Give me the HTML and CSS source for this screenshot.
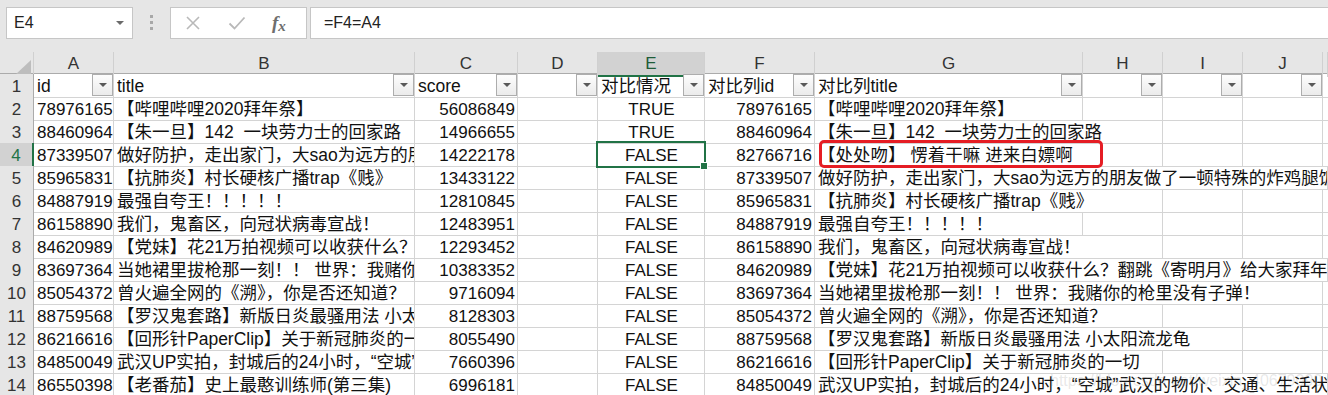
FILE: index.html
```html
<!DOCTYPE html>
<html lang="zh-CN">
<head>
  <meta charset="UTF-8">
  <title>对比列title</title>
  <link rel="stylesheet" href="styles.css">
</head>
<body>
<div class="formula-bar">
  <div class="name-box"><span class="ref">E4</span><i class="caret"></i></div>
  <div class="grip"><i></i><i></i><i></i></div>
  <div class="func-box">
    <svg class="ico" width="16" height="16" viewBox="0 0 16 16"><path d="M2 2 L14 14 M14 2 L2 14" stroke="#b9b9b9" stroke-width="1.6" fill="none"/></svg>
    <svg class="ico" width="18" height="16" viewBox="0 0 18 16"><path d="M1.5 8.5 L6.5 13.5 L16.5 2.5" stroke="#b9b9b9" stroke-width="1.8" fill="none"/></svg>
    <span class="fx">f<span>x</span></span>
  </div>
  <div class="formula">=F4=A4</div>
</div>

<div class="sheet">
  <!-- 列标 -->
  <div class="row col-head">
    <div class="corner"><i></i></div>
    <div class="ch">A</div><div class="ch">B</div><div class="ch">C</div><div class="ch">D</div>
    <div class="ch on">E</div><div class="ch">F</div><div class="ch">G</div><div class="ch">H</div>
    <div class="ch">I</div><div class="ch">J</div><div class="ch"></div>
  </div>

  <!-- 表头 + 筛选按钮 -->
  <div class="row">
    <div class="rh">1</div>
    <div class="c hd"><span>id</span><b class="flt"></b></div>
    <div class="c hd"><span>title</span><b class="flt"></b></div>
    <div class="c hd"><span>score</span><b class="flt"></b></div>
    <div class="c hd"><span></span><b class="flt"></b></div>
    <div class="c hd"><span>对比情况</span><b class="flt"></b></div>
    <div class="c hd"><span>对比列id</span><b class="flt"></b></div>
    <div class="c hd"><span>对比列title</span><b class="flt"></b></div>
    <div class="c hd"><span></span><b class="flt"></b></div>
    <div class="c hd"><span></span><b class="flt"></b></div>
    <div class="c hd"><span></span><b class="flt"></b></div>
    <div class="c"></div>
  </div>

  <div class="row">
    <div class="rh">2</div>
    <div class="c num">78976165</div><div class="c">【哔哩哔哩2020拜年祭】</div><div class="c num">56086849</div><div class="c"></div>
    <div class="c mid">TRUE</div><div class="c num">78976165</div><div class="c">【哔哩哔哩2020拜年祭】</div>
    <div class="c"></div><div class="c"></div><div class="c"></div><div class="c"></div>
  </div>
  <div class="row">
    <div class="rh">3</div>
    <div class="c num">88460964</div><div class="c">【朱一旦】142  一块劳力士的回家路</div><div class="c num">14966655</div><div class="c"></div>
    <div class="c mid">TRUE</div><div class="c num">88460964</div><div class="c g2">【朱一旦】142  一块劳力士的回家路</div>
    <div class="c"></div><div class="c"></div><div class="c"></div>
  </div>
  <div class="row">
    <div class="rh on">4</div>
    <div class="c num">87339507</div><div class="c">做好防护，走出家门，大sao为远方的朋友做了一顿特殊的炸鸡腿饭</div><div class="c num">14222178</div><div class="c"></div>
    <div class="c mid sel">FALSE</div><div class="c num">82766716</div><div class="c g2">【处处吻】 愣着干嘛 进来白嫖啊</div>
    <div class="c"></div><div class="c"></div><div class="c"></div>
  </div>
  <div class="row">
    <div class="rh">5</div>
    <div class="c num">85965831</div><div class="c">【抗肺炎】村长硬核广播trap《贱》</div><div class="c num">13433122</div><div class="c"></div>
    <div class="c mid">FALSE</div><div class="c num">87339507</div><div class="c g5">做好防护，走出家门，大sao为远方的朋友做了一顿特殊的炸鸡腿饭</div>
  </div>
  <div class="row">
    <div class="rh">6</div>
    <div class="c num">84887919</div><div class="c">最强自夸王！！！！！</div><div class="c num">12810845</div><div class="c"></div>
    <div class="c mid">FALSE</div><div class="c num">85965831</div><div class="c g2">【抗肺炎】村长硬核广播trap《贱》</div>
    <div class="c"></div><div class="c"></div><div class="c"></div>
  </div>
  <div class="row">
    <div class="rh">7</div>
    <div class="c num">86158890</div><div class="c">我们，鬼畜区，向冠状病毒宣战！</div><div class="c num">12483951</div><div class="c"></div>
    <div class="c mid">FALSE</div><div class="c num">84887919</div><div class="c">最强自夸王！！！！！</div>
    <div class="c"></div><div class="c"></div><div class="c"></div><div class="c"></div>
  </div>
  <div class="row">
    <div class="rh">8</div>
    <div class="c num">84620989</div><div class="c">【党妹】花21万拍视频可以收获什么？翻跳《寄明月》给大家拜年</div><div class="c num">12293452</div><div class="c"></div>
    <div class="c mid">FALSE</div><div class="c num">86158890</div><div class="c g2">我们，鬼畜区，向冠状病毒宣战！</div>
    <div class="c"></div><div class="c"></div><div class="c"></div>
  </div>
  <div class="row">
    <div class="rh">9</div>
    <div class="c num">83697364</div><div class="c">当她裙里拔枪那一刻！！ 世界：我赌你的枪里没有子弹！</div><div class="c num">10383352</div><div class="c"></div>
    <div class="c mid">FALSE</div><div class="c num">84620989</div><div class="c g5">【党妹】花21万拍视频可以收获什么？翻跳《寄明月》给大家拜年</div>
  </div>
  <div class="row">
    <div class="rh">10</div>
    <div class="c num">85054372</div><div class="c">曾火遍全网的《溯》，你是否还知道？</div><div class="c num">9716094</div><div class="c"></div>
    <div class="c mid">FALSE</div><div class="c num">83697364</div><div class="c g4">当她裙里拔枪那一刻！！ 世界：我赌你的枪里没有子弹！</div>
    <div class="c"></div>
  </div>
  <div class="row">
    <div class="rh">11</div>
    <div class="c num">88759568</div><div class="c">【罗汉鬼套路】新版日炎最骚用法 小太阳流龙龟</div><div class="c num">8128303</div><div class="c"></div>
    <div class="c mid">FALSE</div><div class="c num">85054372</div><div class="c g2">曾火遍全网的《溯》，你是否还知道？</div>
    <div class="c"></div><div class="c"></div><div class="c"></div>
  </div>
  <div class="row">
    <div class="rh">12</div>
    <div class="c num">86216616</div><div class="c">【回形针PaperClip】关于新冠肺炎的一切</div><div class="c num">8055490</div><div class="c"></div>
    <div class="c mid">FALSE</div><div class="c num">88759568</div><div class="c g3">【罗汉鬼套路】新版日炎最骚用法 小太阳流龙龟</div>
    <div class="c"></div><div class="c"></div>
  </div>
  <div class="row">
    <div class="rh">13</div>
    <div class="c num">84850049</div><div class="c">武汉UP实拍，封城后的24小时，“空城”武汉的物价、交通、生活</div><div class="c num">7660396</div><div class="c"></div>
    <div class="c mid">FALSE</div><div class="c num">86216616</div><div class="c g2">【回形针PaperClip】关于新冠肺炎的一切</div>
    <div class="c"></div><div class="c"></div><div class="c"></div>
  </div>
  <div class="row">
    <div class="rh">14</div>
    <div class="c num">86550398</div><div class="c">【老番茄】史上最憨训练师(第三集)</div><div class="c num">6996181</div><div class="c"></div>
    <div class="c mid">FALSE</div><div class="c num">84850049</div><div class="c g5">武汉UP实拍，封城后的24小时，“空城”武汉的物价、交通、生活状况</div>
  </div>

  <!-- 截图上的红框标注和水印 -->
  <div class="mark"></div>
  <div class="watermark">https://blog.csdn.net/weixin_40679090</div>
</div>
</body>
</html>
```

FILE: styles.css
```css
* {
  margin: 0;
  padding: 0;
  box-sizing: border-box;
}
html, body {
  width: 100%;
  height: 100%;
  overflow: hidden;
  background: #fff;
}
body {
  font-family: "Liberation Sans", "Noto Sans CJK SC", sans-serif;
  font-size: 17px;
  color: #111;
}

/* ---------- 编辑栏 ---------- */
.formula-bar {
  display: flex;
  align-items: flex-start;
  height: 52px;
  padding: 7px 0 0 6px;
  background: #e6e6e6;
}
.name-box {
  display: flex;
  align-items: center;
  width: 127px;
  height: 32px;
  padding: 0 8px 0 7px;
  background: #fff;
  border: 1px solid #c6c6c6;
  font-size: 16px;
  color: #222;
}
.name-box .ref {
  flex: 1;
}
.caret {
  width: 0;
  height: 0;
  border-left: 4px solid transparent;
  border-right: 4px solid transparent;
  border-top: 4px solid #6a6a6a;
}
.grip {
  width: 37px;
  display: flex;
  flex-direction: column;
  align-items: center;
  gap: 3px;
  padding-top: 8px;
}
.grip i {
  width: 3px;
  height: 3px;
  background: #a8a8a8;
}
.func-box {
  display: flex;
  align-items: center;
  width: 137px;
  height: 32px;
  padding-left: 14px;
  gap: 28px;
  background: #fff;
  border: 1px solid #c6c6c6;
}
.func-box .ico:nth-child(2) {
  margin-left: -1px;
}
.fx {
  font-family: "Liberation Serif", serif;
  font-style: italic;
  font-weight: bold;
  font-size: 19px;
  color: #6e6e6e;
  margin-left: -2px;
}
.fx span {
  font-size: 15px;
  position: relative;
  top: 2px;
}
.formula {
  flex: 1;
  height: 32px;
  margin-left: 3px;
  margin-right: -2px;
  padding-left: 13px;
  line-height: 30px;
  font-size: 16px;
  color: #222;
  background: #fff;
  border: 1px solid #c6c6c6;
}

/* ---------- 表格 ---------- */
.sheet {
  position: relative;
}
.row {
  display: grid;
  grid-template-columns: 34px 80px 301px 103px 80px 107px 110px 268px 80px 80px 80px 1fr;
  height: 23px;
}
.col-head {
  height: 22px;
  background: #e6e6e6;
  border-bottom: 1px solid #ababab;
}
.corner {
  display: flex;
  align-items: flex-end;
  justify-content: flex-end;
  padding: 0 2px 2px 0;
  border-right: 1px solid #d0d0d0;
}
.corner i {
  width: 0;
  height: 0;
  border-left: 16px solid transparent;
  border-bottom: 15px solid #bdbdbd;
}
.ch {
  border-right: 1px solid #d0d0d0;
  text-align: center;
  line-height: 22px;
  padding-top: 1px;
  font-size: 17px;
  color: #333;
}
.ch.on {
  background: #d2d2d2;
  color: #1e5c38;
  border-bottom: 2px solid #217346;
}
.rh {
  background: #e6e6e6;
  border-right: 1px solid #ababab;
  border-bottom: 1px solid #cfcfcf;
  text-align: center;
  line-height: 21px;
  padding-top: 2px;
  color: #333;
}
.rh.on {
  background: #d2d2d2;
  color: #217346;
  border-right: 2px solid #217346;
}

.c {
  overflow: hidden;
  white-space: pre;
  font-size: 17.5px;
  line-height: 21px;
  padding: 2px 2px 0 3px;
  border-right: 1px solid #d4d4d4;
  border-bottom: 1px solid #d4d4d4;
}
.num, .mid {
  font-size: 17px;
}
.num {
  text-align: right;
}
.mid {
  text-align: center;
}
.g2 { grid-column: span 2; }
.g3 { grid-column: span 3; }
.g4 { grid-column: span 4; }
.g5 { grid-column: span 5; }

/* 筛选按钮 */
.hd {
  display: flex;
  padding-top: 0;
  padding-right: 0;
}
.hd span {
  flex: 1;
  overflow: hidden;
  padding-top: 2px;
}
.flt {
  display: flex;
  align-items: center;
  justify-content: center;
  width: 21px;
  height: 22px;
  border: 1px solid #adadad;
  background: linear-gradient(#fdfdfd, #ebebeb);
}
.flt::after {
  content: "";
  border-left: 4px solid transparent;
  border-right: 4px solid transparent;
  border-top: 4px solid #595959;
}

/* 选中单元格 */
.sel {
  position: relative;
  overflow: visible;
}
.sel::before {
  content: "";
  position: absolute;
  top: -2px;
  left: -2px;
  right: -2px;
  bottom: -2px;
  border: 2px solid #217346;
}
.sel::after {
  content: "";
  position: absolute;
  right: -4px;
  bottom: -4px;
  width: 6px;
  height: 6px;
  background: #217346;
  border: 1px solid #fff;
}

.mark {
  position: absolute;
  left: 819px;
  top: 88px;
  width: 284px;
  height: 28px;
  border: 3px solid #e51d24;
  border-radius: 5px;
}
.watermark {
  position: absolute;
  left: 1050px;
  top: 320px;
  font-size: 16px;
  color: rgba(120, 120, 120, 0.18);
  white-space: nowrap;
}
```
